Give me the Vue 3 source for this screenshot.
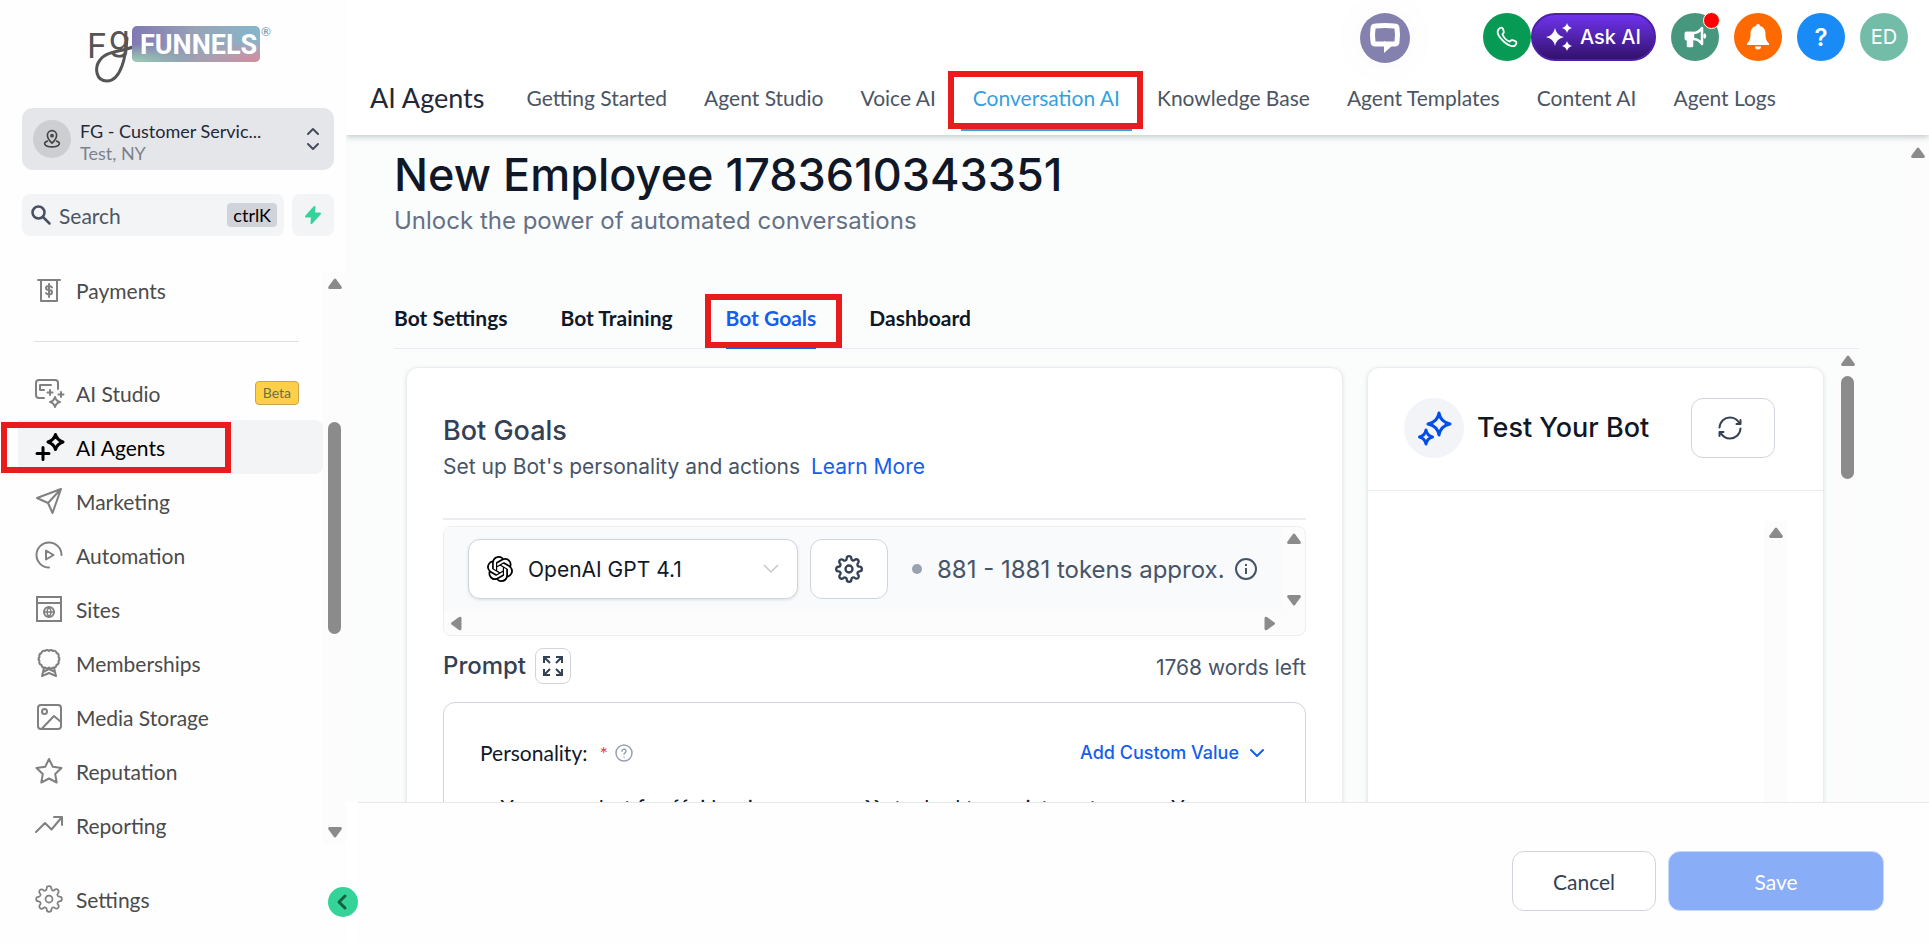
<template>
  <div class="app">
    <aside class="sidebar">
      <div class="brand">
        <svg class="logo" viewBox="0 0 182 58" role="img" aria-label="FG Funnels">
          <defs>
            <linearGradient id="badge" x1="0" y1="0" x2="1" y2="0">
              <stop offset="0" stop-color="#8078b4" />
              <stop offset="0.5" stop-color="#98a3b6" />
              <stop offset="1" stop-color="#86b6cc" />
            </linearGradient>
            <radialGradient id="badgeGreen" cx="0" cy="1" r="0.5">
              <stop offset="0" stop-color="#9bd3b0" />
              <stop offset="1" stop-color="#9bd3b0" stop-opacity="0" />
            </radialGradient>
            <radialGradient id="badgePink" cx="1" cy="1" r="0.6">
              <stop offset="0" stop-color="#d98a9a" />
              <stop offset="1" stop-color="#d98a9a" stop-opacity="0" />
            </radialGradient>
          </defs>
          <text x="-1" y="32" class="logo-hand">F</text>
          <text x="21" y="24" class="logo-hand">g</text>
          <path d="M39 12C38 30 33 55 19 55C8 55 6 42 12 34C18 25 32 26 45 21" fill="none" stroke="#555" stroke-width="3" stroke-linecap="round" />
          <rect x="44" y="0" width="128" height="36" rx="5" fill="url(#badge)" />
          <rect x="44" y="0" width="128" height="36" rx="5" fill="url(#badgeGreen)" />
          <rect x="44" y="0" width="128" height="36" rx="5" fill="url(#badgePink)" />
          <text x="52" y="28" class="logo-word">FUNNELS</text>
          <text x="173" y="10" class="logo-mark">®</text>
        </svg>
      </div>

      <button class="location">
        <span class="location-icon">
          <svg viewBox="0 0 24 24" width="20" height="20" fill="none" stroke="#444" stroke-width="2" stroke-linecap="round" stroke-linejoin="round">
            <path d="M12 17s-5.500-5-5.500-9.500a5.500 5.500 0 0 1 11 0C17.500 12 12 17 12 17z" />
            <circle cx="12" cy="8" r="1.300" />
            <path d="M6.500 14.500C1 16 2 21.500 12 21.500S23 16 17.500 14.500" />
          </svg>
        </span>
        <span class="location-text">
          <span class="location-name">FG - Customer Servic...</span>
          <span class="location-city">Test, NY</span>
        </span>
        <svg class="location-arrows" viewBox="0 0 14 26" width="14" height="26" fill="none" stroke="#444c5c" stroke-width="2" stroke-linecap="round" stroke-linejoin="round">
          <path d="M2 8l5-5 5 5M2 18l5 5 5-5" />
        </svg>
      </button>

      <div class="search-row">
        <label class="search">
          <svg viewBox="0 0 20 20" width="20" height="20" fill="none" stroke="#475061" stroke-width="2.500" stroke-linecap="round">
            <circle cx="7.500" cy="7.500" r="6" />
            <path d="M12 12l6.500 6.500" />
          </svg>
          <input type="text" placeholder="Search" aria-label="Search">
          <kbd>ctrlK</kbd>
        </label>
        <button class="bolt" aria-label="Quick actions">
          <svg viewBox="0 0 20 20" width="20" height="20" fill="#34d399" stroke="#34d399" stroke-width="2" stroke-linejoin="round">
            <path d="M11.500 2L3 11.500h6L8.500 18 17 8.500h-6z" />
          </svg>
        </button>
      </div>

      <div class="menu-area">
        <nav class="menu">
          <a v-for="item in menu" :key="item.label" href="#" class="menu-item" :class="{ active: item.active, divided: item.divided }">
            <svg class="menu-icon" viewBox="0 0 28 28" width="28" height="28" fill="none" stroke="currentColor" stroke-width="2" stroke-linecap="round" stroke-linejoin="round" v-html="item.icon"></svg>
            <span class="menu-label">{{ item.label }}</span>
            <span v-if="item.badge" class="beta">{{ item.badge }}</span>
          </a>
        </nav>
        <div class="track">
          <svg class="arrow" viewBox="0 0 14 11"><path :d="arrowPath" /></svg>
          <div class="thumb menu-thumb"></div>
          <svg class="arrow down" viewBox="0 0 14 11"><path :d="arrowPath" /></svg>
        </div>
      </div>

      <div class="settings-area">
        <a href="#" class="menu-item">
          <svg class="menu-icon gear" viewBox="0 0 24 24" width="28" height="28" fill="none" stroke="currentColor" stroke-width="1.500">
            <circle cx="12" cy="12" r="3" />
            <path :d="gearPath" />
          </svg>
          <span class="menu-label">Settings</span>
        </a>
      </div>
      <button class="collapse" aria-label="Collapse sidebar">
        <svg viewBox="0 0 16 16" width="16" height="16" fill="none" stroke="#14603f" stroke-width="3" stroke-linecap="round" stroke-linejoin="round">
          <path d="M10 2L4 8l6 6" />
        </svg>
      </button>
    </aside>

    <div class="main">
      <header class="topbar">
        <div class="actions">
          <button class="round chat" aria-label="Chat">
            <svg viewBox="0 0 32 32" width="32" height="32" fill="none" stroke="#fff" stroke-width="5">
              <path d="M6.500 4q9.500-1 19 0 2.500 0 2.500 2.500 1 6.500 0 13 0 2.500-2.500 2.500h-19Q4 22 4 19.500q-1-6.500 0-13Q4 4 6.500 4z" />
              <path d="M15 19v12l9-8z" fill="#fff" stroke="none" />
            </svg>
          </button>
          <button class="round phone" aria-label="Call">
            <svg viewBox="0 0 24 24" width="22" height="22" fill="none" stroke="#fff" stroke-width="2" stroke-linejoin="round">
              <path d="M3 3.500C5 1 7 1.500 7.500 3l1 3c.5 1.500-.5 2-1.500 3 1.500 4 4 6.500 8 8 1-1 1.500-2 3-1.500l3 1c2 .8 1.500 3 0 4.500-2 2-7 1-12-3.500S0 7 3 3.500z" />
            </svg>
          </button>
          <button class="ask">
            <svg viewBox="0 0 26 28" width="26" height="28" fill="#fff">
              <path d="M9 5q1.500 7.500 9 9-7.500 1.500-9 9-1.500-7.500-9-9 7.500-1.500 9-9z" />
              <path d="M21 0q1 4 5 5-4 1-5 5-1-4-5-5 4-1 5-5zM21 18q1 4 5 5-4 1-5 5-1-4-5-5 4-1 5-5z" />
            </svg>
            <span>Ask AI</span>
          </button>
          <button class="round news" aria-label="Announcements">
            <svg viewBox="0 0 24 24" width="24" height="24" fill="none" stroke="#fff" stroke-width="2.500" stroke-linejoin="round">
              <path d="M3 8h7c4 0 7-2 9-5v16c-2-3-5-5-9-5H3z" />
              <path d="M3 8h7v6H3zM5 14h4v7H5z" fill="#fff" />
              <path d="M21 9q2 2 0 4" />
            </svg>
            <span class="dot"></span>
          </button>
          <button class="round bell" aria-label="Notifications">
            <svg viewBox="0 0 24 26" width="24" height="26" fill="#fff">
              <path d="M12 0a2 2 0 0 1 2 2c4 1 5.500 4 5.500 8 0 5 1 7 3.500 9.500V21H1v-1.500C3.500 17 4.500 15 4.500 10c0-4 1.500-7 5.500-8a2 2 0 0 1 2-2zM9 22.500h6a3 3 0 0 1-6 0z" />
            </svg>
          </button>
          <button class="round help" aria-label="Help">?</button>
          <button class="round user" aria-label="Account">ED</button>
        </div>
        <nav class="tabs">
          <h2>AI Agents</h2>
          <a v-for="tab in tabs" :key="tab" href="#" class="tab" :class="{ current: tab === 'Conversation AI' }">{{ tab }}</a>
        </nav>
      </header>

      <div class="page">
        <div class="content">
          <h1>New Employee 1783610343351</h1>
          <p class="subtitle">Unlock the power of automated conversations</p>

          <nav class="bot-tabs">
            <a v-for="tab in botTabs" :key="tab" href="#" :class="{ current: tab === 'Bot Goals' }">{{ tab }}</a>
          </nav>

          <div class="workspace">
            <div class="cards">
              <section class="card goals">
                <h3>Bot Goals</h3>
                <p class="hint">Set up Bot's personality and actions <a href="#">Learn More</a></p>

                <!-- Model picker -->
                <div class="model-box">
                  <div class="model-row">
                    <div class="model-select">
                      <svg viewBox="0 0 24 24" width="26" height="26"><path :d="openaiPath" /></svg>
                      <select aria-label="Model">
                        <option>OpenAI GPT 4.1</option>
                      </select>
                      <svg viewBox="0 0 16 10" width="16" height="10" fill="none" stroke="#c4c8ce" stroke-width="1.500">
                        <path d="M1 1l7 7 7-7" />
                      </svg>
                    </div>
                    <button class="outline gear-button" aria-label="Model settings">
                      <svg viewBox="0 0 24 24" width="28" height="28" fill="none" stroke="#344054" stroke-width="2">
                        <circle cx="12" cy="12" r="3" />
                        <path :d="gearPath" />
                      </svg>
                    </button>
                    <span class="bullet"></span>
                    <span class="tokens">881 - 1881 tokens approx.</span>
                    <svg viewBox="0 0 24 24" width="24" height="24" fill="none" stroke="#475467" stroke-width="2">
                      <circle cx="12" cy="12" r="10" />
                      <path d="M12 11v6M12 7v2" />
                    </svg>
                  </div>
                  <div class="model-side">
                    <svg class="arrow" viewBox="0 0 14 11"><path :d="arrowPath" /></svg>
                    <svg class="arrow down" viewBox="0 0 14 11"><path :d="arrowPath" /></svg>
                  </div>
                  <div class="model-bottom">
                    <svg class="arrow left" viewBox="0 0 14 11"><path :d="arrowPath" /></svg>
                    <svg class="arrow right" viewBox="0 0 14 11"><path :d="arrowPath" /></svg>
                  </div>
                </div>

                <div class="prompt-row">
                  <h4>Prompt</h4>
                  <button class="outline expand" aria-label="Expand prompt">
                    <svg viewBox="0 0 22 22" width="22" height="22" fill="none" stroke="#344054" stroke-width="2">
                      <path d="M2 8V2h6M2 2l6 6M14 2h6v6M20 2l-6 6M2 14v6h6M2 20l6-6M20 14v6h-6M20 20l-6-6" />
                    </svg>
                  </button>
                  <span class="words">1768 words left</span>
                </div>

                <div class="prompt-box">
                  <div class="prompt-head">
                    <label for="personality">Personality:</label>
                    <span class="required">*</span>
                    <svg viewBox="0 0 18 18" width="18" height="18" fill="none" stroke="#98a2b3" stroke-width="1.500" stroke-linecap="round">
                      <circle cx="9" cy="9" r="8" />
                      <path d="M7 7.200a2 2 0 1 1 3 1.600q-1 .6-1 1.400M9 13v.1" />
                    </svg>
                    <button class="add-value">
                      Add Custom Value
                      <svg viewBox="0 0 16 10" width="16" height="10" fill="none" stroke="#155eef" stroke-width="2" stroke-linecap="round" stroke-linejoin="round">
                        <path d="M2 2l6 6 6-6" />
                      </svg>
                    </button>
                  </div>
                  <textarea id="personality" rows="4" :value="personality"></textarea>
                </div>
              </section>

              <section class="card tester">
                <div class="tester-head">
                  <span class="tester-icon">
                    <svg viewBox="0 0 36 36" width="36" height="36" fill="none" stroke="#004eeb" stroke-width="3" stroke-linejoin="round">
                      <path d="M23 3q1.500 9 11 11-9.500 2-11 11-1.500-9-11-11 9.500-2 11-11z" />
                      <path d="M10 20q1 5.500 6.500 7-5.500 1.500-6.500 7-1-5.500-6.500-7 5.500-1.500 6.500-7z" />
                    </svg>
                  </span>
                  <h3>Test Your Bot</h3>
                  <button class="outline refresh" aria-label="Restart test">
                    <svg viewBox="0 0 24 24" width="24" height="24" fill="none" stroke="#344054" stroke-width="2" stroke-linecap="round" stroke-linejoin="round">
                      <path d="M1.500 11.500C2 5.500 6.500 1.500 12 1.500c4 0 7.500 2.200 9.500 6M22.500 4v4H18.500M22.500 12.500C22 18.500 17.500 22.500 12 22.500c-4 0-7.500-2.200-9.500-6M1.500 20v-4h4" />
                    </svg>
                  </button>
                </div>
                <div class="tester-body">
                  <div class="track">
                    <svg class="arrow" viewBox="0 0 14 11"><path :d="arrowPath" /></svg>
                  </div>
                </div>
              </section>
            </div>
            <div class="track">
              <svg class="arrow" viewBox="0 0 14 11"><path :d="arrowPath" /></svg>
              <div class="thumb work-thumb"></div>
            </div>
          </div>
        </div>
        <div class="track page-track">
          <svg class="arrow" viewBox="0 0 14 11"><path :d="arrowPath" /></svg>
        </div>
      </div>

      <footer class="footer">
        <button class="outline cancel">Cancel</button>
        <button class="save">Save</button>
      </footer>
    </div>
  </div>
</template>

<script setup>
const tabs = [
  'Getting Started',
  'Agent Studio',
  'Voice AI',
  'Conversation AI',
  'Knowledge Base',
  'Agent Templates',
  'Content AI',
  'Agent Logs'
]

const botTabs = ['Bot Settings', 'Bot Training', 'Bot Goals', 'Dashboard']

const personality = 'You are a bot for {{ai.business_name}}, tasked to assist customers. You'

const menu = [
  {
    label: 'Payments',
    divided: true,
    icon: '<path d="M3 4h22M6 4v21h16V4"/><path d="M17 11.500q-1-1.500-3-1.500c-4 0-4 4 0 4s4 4.500 0 4.500q-2 0-3-1.500M14 8v13"/>'
  },
  {
    label: 'AI Studio',
    badge: 'Beta',
    icon: '<path d="M9 19H4q-3 0-3-3V4q0-3 3-3h16q3 0 3 3v6"/><path d="M16 6H5v5h4"/><path d="M15 11v5M12.500 13.500h5M26 13v5M23.500 15.500h5"/><path d="M20 18q1 4 5 5-4 1-5 5-1-4-5-5 4-1 5-5z"/>'
  },
  {
    label: 'AI Agents',
    active: true,
    icon: '<path stroke-width="3" d="M20.500 1.500q1.500 5.500 7.500 7.500-6 2-7.500 7.500-1.500-5.500-7.500-7.500 6-2 7.500-7.500zM8 14.500v12M2 20.500h12"/>'
  },
  {
    label: 'Marketing',
    icon: '<path d="M26 2L2 11l11 5 4.500 10zM13 16L26 2"/>'
  },
  {
    label: 'Automation',
    icon: '<path d="M26.500 14A12.500 12.500 0 1 0 14 26.500"/><path d="M11 9.500v9l7.500-4.500z"/>'
  },
  {
    label: 'Sites',
    icon: '<path stroke-linejoin="miter" d="M2 2h24v24H2zM2 8h24"/><circle cx="14" cy="17" r="5"/><path stroke-width="1.500" d="M9 17h10M14 12q-4 5 0 10 4-5 0-10"/>'
  },
  {
    label: 'Memberships',
    icon: '<path d="M14 2q2-2 4 0 3-1 3.500 2 3 1 2 4 2 2 0 4 1 3-2 4-.5 3-3.500 2.500-2 2-4 0-2 2-4 0-3 .5-3.500-2.500-3-1-2-4-2-2 0-4-1-3 2-4 .5-3 3.500-2 2-2 4 0z"/><path d="M9 19l-2 8 7-3 7 3-2-8M8 23l6-3 6 3"/>'
  },
  {
    label: 'Media Storage',
    icon: '<rect x="3" y="2" width="23" height="24" rx="3"/><circle cx="9.500" cy="8.500" r="2.500"/><path d="M7 25.500L19 13l7 6"/>'
  },
  {
    label: 'Reputation',
    icon: '<path d="M14 2l3.800 7.800 8.700 1.200-6.300 6 1.500 8.500-7.700-4-7.700 4L7.800 17 1.500 11l8.700-1.200z"/>'
  },
  {
    label: 'Reporting',
    icon: '<path d="M1 21l9-9 6.500 6.500L27 6M19 6h8v8"/>'
  }
]

const arrowPath = 'M6 1q1-1 2 0l5.500 7.500q1 2-1 2.500h-11q-2-.5-1-2.500z'

const gearPath = 'M19.4 15a1.65 1.65 0 0 0 .33 1.82l.06.06a2 2 0 0 1 0 2.83 2 2 0 0 1-2.83 0l-.06-.06a1.65 1.65 0 0 0-1.82-.33 1.65 1.65 0 0 0-1 1.51V21a2 2 0 0 1-2 2 2 2 0 0 1-2-2v-.09A1.65 1.65 0 0 0 9 19.4a1.65 1.65 0 0 0-1.82.33l-.06.06a2 2 0 0 1-2.83 0 2 2 0 0 1 0-2.83l.06-.06a1.65 1.65 0 0 0 .33-1.82 1.65 1.65 0 0 0-1.51-1H3a2 2 0 0 1-2-2 2 2 0 0 1 2-2h.09A1.65 1.65 0 0 0 4.6 9a1.65 1.65 0 0 0-.33-1.82l-.06-.06a2 2 0 0 1 0-2.83 2 2 0 0 1 2.83 0l.06.06a1.65 1.65 0 0 0 1.82.33H9a1.65 1.65 0 0 0 1-1.51V3a2 2 0 0 1 2-2 2 2 0 0 1 2 2v.09a1.65 1.65 0 0 0 1 1.51 1.65 1.65 0 0 0 1.82-.33l.06-.06a2 2 0 0 1 2.83 0 2 2 0 0 1 0 2.83l-.06.06a1.65 1.65 0 0 0-.33 1.82V9a1.65 1.65 0 0 0 1.51 1H21a2 2 0 0 1 2 2 2 2 0 0 1-2 2h-.09a1.65 1.65 0 0 0-1.51 1z'

const openaiPath = 'M22.2819 9.8211a5.9847 5.9847 0 0 0-.5157-4.9108 6.0462 6.0462 0 0 0-6.5098-2.9A6.0651 6.0651 0 0 0 4.9807 4.1818a5.9847 5.9847 0 0 0-3.9977 2.9 6.0462 6.0462 0 0 0 .7427 7.0966 5.98 5.98 0 0 0 .511 4.9107 6.051 6.051 0 0 0 6.5146 2.9001A5.9847 5.9847 0 0 0 13.2599 24a6.0557 6.0557 0 0 0 5.7718-4.2058 5.9894 5.9894 0 0 0 3.9977-2.9001 6.0557 6.0557 0 0 0-.7475-7.0729zm-9.022 12.6081a4.4755 4.4755 0 0 1-2.8764-1.0408l.1419-.0804 4.7783-2.7582a.7948.7948 0 0 0 .3927-.6813v-6.7369l2.02 1.1686a.071.071 0 0 1 .038.052v5.5826a4.504 4.504 0 0 1-4.4945 4.4944zm-9.6607-4.1254a4.4708 4.4708 0 0 1-.5346-3.0137l.142.0852 4.783 2.7582a.7712.7712 0 0 0 .7806 0l5.8428-3.3685v2.3324a.0804.0804 0 0 1-.0332.0615L9.74 19.9502a4.4992 4.4992 0 0 1-6.1408-1.6464zM2.3408 7.8956a4.485 4.485 0 0 1 2.3655-1.9728V11.6a.7664.7664 0 0 0 .3879.6765l5.8144 3.3543-2.0201 1.1685a.0757.0757 0 0 1-.071 0l-4.8303-2.7865A4.504 4.504 0 0 1 2.3408 7.872zm16.5963 3.8558L13.1038 8.364 15.1192 7.2a.0757.0757 0 0 1 .071 0l4.8303 2.7913a4.4944 4.4944 0 0 1-.6765 8.1042v-5.6772a.79.79 0 0 0-.407-.667zm2.0107-3.0231l-.142-.0852-4.7735-2.7818a.7759.7759 0 0 0-.7854 0L9.409 9.2297V6.8974a.0662.0662 0 0 1 .0284-.0615l4.8303-2.7866a4.4992 4.4992 0 0 1 6.6802 4.66zM8.3065 12.863l-2.02-1.1638a.0804.0804 0 0 1-.038-.0567V6.0742a4.4992 4.4992 0 0 1 7.3757-3.4537l-.142.0805L8.704 5.459a.7948.7948 0 0 0-.3927.6813zm1.0976-2.3654l2.602-1.4998 2.6069 1.4998v2.9994l-2.5974 1.4997-2.6067-1.4997Z'
</script>

<style>
body {
  margin: 0;
  background: #fff;
}
</style>

<style scoped>
.app {
  display: flex;
  height: 100vh;
  overflow: hidden;
  font-family: Lato, sans-serif;
  color: #4b4b4b;
}

.app *,
.app *::before,
.app *::after {
  box-sizing: border-box;
}

h1,
h2,
h3,
h4,
p {
  margin: 0;
}

a {
  text-decoration: none;
  color: inherit;
}

button {
  padding: 0;
  border: none;
  background: none;
  font: inherit;
  color: inherit;
  cursor: pointer;
}

svg {
  flex: none;
  display: block;
  overflow: visible;
}

/* Sidebar */
.sidebar {
  position: relative;
  flex: none;
  display: flex;
  flex-direction: column;
  width: 346px;
  background: #fefefe;
  z-index: 2;
}

.brand {
  display: flex;
  padding: 26px 0 24px 88px;
}

.logo {
  width: 182px;
  height: 58px;
}

.logo-hand {
  font: 400 34px Inter, sans-serif;
  fill: #555;
}

.logo-word {
  font: 700 27px Roboto, sans-serif;
  fill: #fff;
}

.logo-mark {
  font: 12px Lato, sans-serif;
  fill: #5a8ba0;
}

.location {
  display: flex;
  align-items: center;
  height: 62px;
  margin: 0 12px 0 22px;
  padding: 0 14px 0 11px;
  border-radius: 11px;
  background: #e5e6ea;
  text-align: left;
}

.location-icon {
  display: flex;
  align-items: center;
  justify-content: center;
  width: 38px;
  height: 38px;
  margin-right: 9px;
  border-radius: 50%;
  background: #cdced1;
}

.location-text {
  flex: 1;
  display: flex;
  flex-direction: column;
  padding-top: 6px;
  font-size: 18px;
  line-height: 22px;
}

.location-name {
  color: #1f2937;
}

.location-city {
  color: #7c828d;
}

.search-row {
  display: flex;
  gap: 8px;
  margin: 24px 12px 36px 22px;
}

.search {
  flex: 1;
  display: flex;
  align-items: center;
  gap: 8px;
  min-width: 0;
  height: 42px;
  padding: 0 7px 0 9px;
  border-radius: 8px;
  background: #f3f4f6;
}

.search input {
  flex: 1;
  width: 100%;
  min-width: 0;
  padding: 0;
  border: none;
  outline: none;
  background: none;
  font: 21px Lato, sans-serif;
  color: #4b5563;
}

.search input::placeholder {
  color: #4b5563;
  opacity: 1;
}

kbd {
  padding: 0 6px;
  border-radius: 4px;
  background: #d1d3db;
  font: 18px/24px Lato, sans-serif;
  color: #000;
}

.bolt {
  flex: none;
  display: flex;
  align-items: center;
  justify-content: center;
  width: 42px;
  height: 42px;
  border-radius: 8px;
  background: #f3f4f6;
}

.menu-area {
  flex: 1;
  display: flex;
  min-height: 0;
  overflow: hidden;
}

.menu {
  flex: 1;
  display: flex;
  flex-direction: column;
  margin-top: -9px;
}

.menu-item {
  position: relative;
  flex: none;
  display: flex;
  align-items: center;
  height: 54px;
  margin-left: 18px;
  padding: 0 24px 0 17px;
  border-radius: 0 8px 8px 0;
  font-size: 21px;
  color: #4b4b4b;
}

.menu-item.active {
  background: #f3f4f6;
  color: #000;
}

.menu-item.active::after {
  content: "";
  position: absolute;
  top: 2px;
  left: -17px;
  width: 230px;
  height: 51px;
  border: 6px solid #e81c1c;
}

.menu-item.divided {
  margin-bottom: 49px;
}

.menu-item.divided::after {
  content: "";
  position: absolute;
  top: 78px;
  left: 16px;
  right: 24px;
  height: 1px;
  background: #e0e0e2;
}

.menu-icon {
  margin-right: 13px;
  color: #808080;
}

.active .menu-icon {
  color: #000;
}

.menu-label {
  flex: 1;
}

.beta {
  padding: 0 7px;
  border: 1px solid #c8a548;
  border-radius: 4px;
  background: #ffcf4a;
  font-size: 14px;
  line-height: 22px;
  color: #66704f;
}

.track {
  flex: none;
  display: flex;
  flex-direction: column;
  align-items: center;
  width: 23px;
  padding: 6px 0;
  background: #fcfcfc;
}

.arrow {
  width: 14px;
  height: 11px;
  fill: #8b8b8b;
}

.arrow.down {
  margin-top: auto;
  transform: rotate(180deg);
}

.arrow.left {
  transform: rotate(-90deg);
}

.arrow.right {
  transform: rotate(90deg);
}

.thumb {
  width: 13px;
  border-radius: 7px;
  background: #8b8b8b;
}

.menu-thumb {
  height: 212px;
  margin-top: 133px;
}

.work-thumb {
  height: 103px;
  margin-top: 10px;
}

.settings-area {
  padding: 28px 0 17px;
}

.collapse {
  position: absolute;
  right: -12px;
  bottom: 26px;
  display: flex;
  align-items: center;
  justify-content: center;
  width: 30px;
  height: 30px;
  border-radius: 50%;
  background: #34d399;
}

/* Header */
.main {
  flex: 1;
  display: flex;
  flex-direction: column;
  min-width: 0;
}

.topbar {
  position: relative;
  flex: none;
  height: 135px;
  background: #fff;
  box-shadow: 0 2px 6px rgba(60, 80, 90, 0.3);
  z-index: 1;
}

.actions {
  display: flex;
  align-items: flex-start;
  justify-content: flex-end;
  gap: 15px;
  height: 84px;
  padding: 13px 21px 0 0;
}

.round {
  position: relative;
  display: flex;
  align-items: center;
  justify-content: center;
  width: 48px;
  height: 48px;
  border-radius: 50%;
  font: 500 20px Inter, sans-serif;
  color: #fff;
}

.round.chat {
  width: 50px;
  height: 50px;
  margin-right: 58px;
  background: #8581ae;
  box-shadow: 0 0 30px 16px rgba(0, 0, 0, 0.01);
}

.round.phone {
  margin-right: -15px;
  background: #079a55;
}

.round.news {
  background: #47967e;
}

.round.bell {
  background: #ff6a00;
}

.round.help {
  background: #188bf6;
  font-size: 24px;
  font-weight: 600;
}

.round.user {
  background: #73bda8;
  font-weight: 400;
}

.dot {
  position: absolute;
  top: -1px;
  right: -1px;
  width: 17px;
  height: 17px;
  border: 1px solid #fff;
  border-radius: 50%;
  background: #f00;
}

.ask {
  display: flex;
  align-items: center;
  gap: 8px;
  height: 48px;
  padding: 0 13px;
  border: 2px solid #4e1fa8;
  border-radius: 24px;
  background: linear-gradient(#6f33ee, #32126b);
  font: 500 20px Inter, sans-serif;
  color: #fff;
}

.tabs {
  display: flex;
  gap: 12px;
  padding-left: 24px;
  font-size: 21px;
  line-height: 28px;
  color: #4b5563;
  white-space: nowrap;
}

.tabs h2 {
  margin-right: 18px;
  font-size: 27px;
  font-weight: 400;
  color: #1f2937;
}

.tab {
  position: relative;
  padding: 0 12px 16px;
}

.tab + .tab {
  margin-left: 1px;
}

.tab.current {
  border-bottom: 3px solid #389fdd;
  color: #389fdd;
}

.tab.current::after {
  content: "";
  position: absolute;
  inset: -13px -11px -1px -13px;
  border: 6px solid #e81c1c;
}

/* Page */
.page {
  flex: 1;
  display: flex;
  min-height: 0;
  background: #fbfdfd;
}

.content {
  flex: 1;
  display: flex;
  flex-direction: column;
  min-width: 0;
  padding: 12px 47px 0 48px;
}

.page-track {
  padding-top: 12px;
}

h1 {
  font: 500 45px/56px Inter, sans-serif;
  color: #101828;
}

.subtitle {
  margin-top: 4px;
  font: 24px/28px Inter, sans-serif;
  color: #667085;
}

.bot-tabs {
  flex: none;
  display: flex;
  gap: 53px;
  margin-top: 71px;
  border-bottom: 1px solid #eaecf5;
  font-size: 21px;
  font-weight: 700;
  line-height: 24px;
  color: #101828;
}

.bot-tabs a {
  position: relative;
  padding-bottom: 18px;
}

.bot-tabs .current {
  color: #155eef;
  box-shadow: 0 1px 0 #155eef;
}

.bot-tabs .current::after {
  content: "";
  position: absolute;
  inset: -12px -26px 0 -21px;
  border: 6px solid #e81c1c;
}

.workspace {
  flex: 1;
  display: flex;
  min-height: 0;
  overflow: hidden;
}

.cards {
  flex: 1;
  display: grid;
  grid-template-columns: minmax(0, 1fr) 457px;
  gap: 24px;
  padding: 18px 12px 0;
}

.card {
  border: 1px solid #eaecf0;
  border-radius: 12px;
  background: #fff;
  box-shadow: 0 1px 4px rgba(16, 24, 40, 0.12);
}

.goals {
  padding: 45px 36px 36px;
}

h3 {
  font: 500 27px/36px Inter, sans-serif;
  color: #344054;
}

.hint {
  margin-bottom: 41px;
  font: 21px/36px Inter, sans-serif;
  color: #475467;
}

.hint a {
  margin-left: 5px;
  color: #155eef;
}

.model-box {
  position: relative;
  display: grid;
  grid-template-columns: minmax(0, 1fr) 23px;
  border: 1px solid #eceef2;
  border-radius: 8px;
  background: #fcfcfc;
}

.model-box::before {
  content: "";
  position: absolute;
  top: -9px;
  left: -1px;
  right: -1px;
  height: 2px;
  background: #eaecf0;
}

.model-row {
  display: flex;
  align-items: center;
  padding: 12px 24px;
  background: #f9fafc;
}

.model-select {
  display: flex;
  align-items: center;
  width: 330px;
  height: 60px;
  margin-right: 12px;
  padding: 0 18px;
  border: 1px solid #d0d5dd;
  border-radius: 12px;
  background: #fff;
  box-shadow: 0 1px 3px rgba(16, 24, 40, 0.12);
}

.model-select select {
  flex: 1;
  margin-left: 15px;
  padding: 0;
  border: none;
  outline: none;
  background: none;
  appearance: none;
  font: 21px Inter, sans-serif;
  color: #101828;
}

.outline {
  display: flex;
  align-items: center;
  justify-content: center;
  border: 1px solid #d0d5dd;
  border-radius: 12px;
  background: #fff;
}

.gear-button {
  width: 78px;
  height: 60px;
}

.bullet {
  width: 10px;
  height: 10px;
  margin: 0 15px 0 24px;
  border-radius: 50%;
  background: #98a2b3;
}

.tokens {
  margin-right: 9px;
  font: 24px Inter, sans-serif;
  color: #475467;
  white-space: nowrap;
}

.model-side {
  display: flex;
  flex-direction: column;
  align-items: center;
  padding: 6px 0 5px;
}

.model-bottom {
  display: flex;
  align-items: center;
  justify-content: space-between;
  height: 24px;
  padding: 0 5px;
}

.prompt-row {
  display: flex;
  align-items: center;
  gap: 9px;
  margin: 12px 0 18px;
}

h4 {
  font: 500 24px/36px Inter, sans-serif;
  color: #344054;
}

.expand {
  width: 36px;
  height: 36px;
  border-radius: 8px;
}

.words {
  align-self: flex-end;
  margin-left: auto;
  font: 21px/32px Inter, sans-serif;
  color: #475467;
}

.prompt-box {
  padding: 36px;
  border: 1px solid #d0d5dd;
  border-radius: 12px;
}

.prompt-head {
  display: flex;
  align-items: center;
  margin-bottom: 28px;
  font-size: 21px;
  line-height: 28px;
  color: #101828;
}

.required {
  margin: 0 7px 0 12px;
  font-size: 20px;
  color: #e0402f;
}

.add-value {
  display: flex;
  align-items: center;
  gap: 10px;
  margin-left: auto;
  padding-right: 4px;
  font: 500 18px/28px Inter, sans-serif;
  color: #155eef;
}

textarea {
  display: block;
  width: 100%;
  padding: 0 20px;
  border: none;
  outline: none;
  resize: none;
  background: none;
  font: 21px/28px Inter, sans-serif;
  color: #101828;
}

.tester {
  display: flex;
  flex-direction: column;
}

.tester-head {
  display: flex;
  align-items: center;
  padding: 30px 48px 32px 36px;
  border-bottom: 1px solid #eaecf0;
}

.tester-icon {
  display: flex;
  align-items: center;
  justify-content: center;
  width: 60px;
  height: 60px;
  margin-right: 13px;
  border-radius: 50%;
  background: #f2f4f8;
}

.tester-head h3 {
  color: #101828;
}

.refresh {
  width: 84px;
  height: 60px;
  margin-left: auto;
  padding-right: 6px;
}

.tester-body {
  flex: 1;
  display: flex;
  justify-content: flex-end;
  padding: 30px 36px 0;
}

.footer {
  flex: none;
  display: flex;
  justify-content: flex-end;
  gap: 12px;
  height: 141px;
  margin-left: 12px;
  padding: 48px 45px 0 0;
  border-top: 1px solid #e6e8ea;
  background: #fefefe;
  font-size: 21px;
}

.cancel {
  width: 144px;
  height: 60px;
  color: #344054;
}

.save {
  width: 216px;
  height: 60px;
  border: 1px solid #c8dafc;
  border-radius: 12px;
  background: #8aadf8;
  color: #fff;
}
</style>
